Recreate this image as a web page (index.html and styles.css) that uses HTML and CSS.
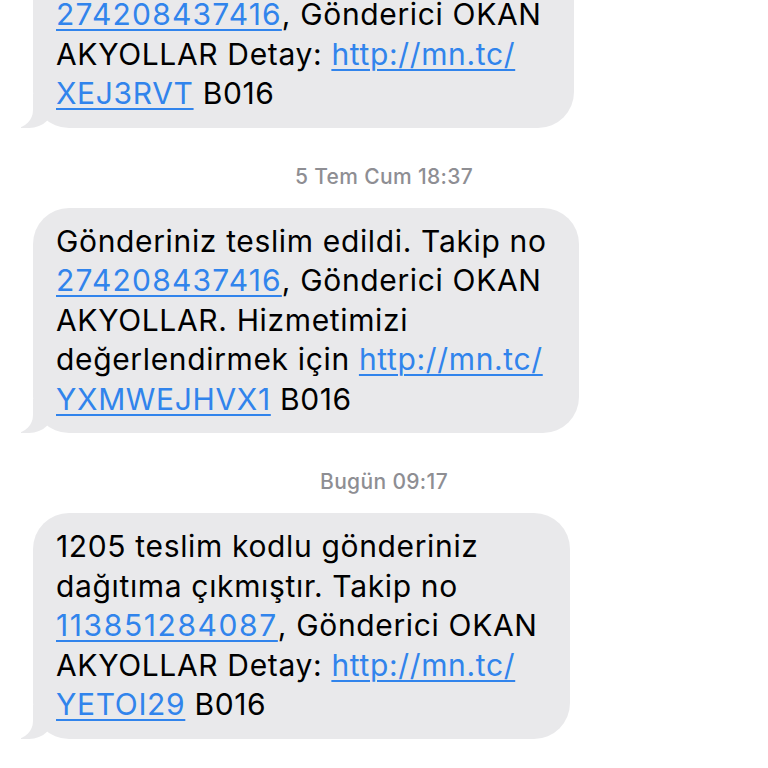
FILE: index.html
```html
<!DOCTYPE html>
<html lang="tr">
<head>
<meta charset="utf-8">
<title>Mesajlar</title>
<link rel="stylesheet" href="styles.css">
</head>
<body>
<main class="thread">
  <div class="bubble bubble-first">
    1205 teslim kodlu gönderiniz<br>
    dağıtıma çıkmıştır. Takip no<br>
    <a class="link num" href="#">274208437416</a>, Gönderici OKAN<br>
    AKYOLLAR Detay: <a class="link" href="#">http://mn.tc/<br>XEJ3RVT</a> B016
  </div>

  <div class="stamp">5 Tem Cum 18:37</div>

  <div class="bubble">
    Gönderiniz teslim edildi. Takip no<br>
    <a class="link num" href="#">274208437416</a>, Gönderici OKAN<br>
    AKYOLLAR. Hizmetimizi<br>
    değerlendirmek için <a class="link" href="#">http://mn.tc/<br>YXMWEJHVX1</a> B016
  </div>

  <div class="stamp">Bugün 09:17</div>

  <div class="bubble">
    1205 teslim kodlu gönderiniz<br>
    dağıtıma çıkmıştır. Takip no<br>
    <a class="link num num-wide" href="#">113851284087</a>, Gönderici OKAN<br>
    AKYOLLAR Detay: <a class="link" href="#">http://mn.tc/<br>YETOI29</a> B016
  </div>
</main>
</body>
</html>
```
FILE: styles.css
```css
html, body {
  margin: 0;
  padding: 0;
  background: #ffffff;
}

body {
  width: 768px;
  height: 768px;
  overflow: hidden;
  font-family: "Inter", "Liberation Sans", sans-serif;
}

.thread {
  display: flex;
  flex-direction: column;
  align-items: flex-start;
  padding-left: 33px;
}

.bubble {
  position: relative;
  box-sizing: border-box;
  background: #e9e9eb;
  color: #000000;
  border-radius: 36px;
  padding: 14px 32px 14px 23px;
  font-size: 30px;
  line-height: 39.5px;
  letter-spacing: 0.65px;
}

.bubble-first {
  margin-top: -98px;
}

.bubble::before {
  content: "";
  position: absolute;
  left: -12px;
  bottom: 0;
  width: 34px;
  height: 34px;
  background: #e9e9eb;
  border-bottom-right-radius: 26px;
}

.bubble::after {
  content: "";
  position: absolute;
  left: -44px;
  bottom: 0;
  width: 44px;
  height: 36px;
  background: #ffffff;
  border-bottom-right-radius: 18px;
}

.link {
  color: #3184ec;
  text-decoration: underline;
  text-decoration-thickness: 2px;
  text-underline-offset: 4px;
}

.num {
  letter-spacing: 1.2px;
}

.num-wide {
  letter-spacing: 1.6px;
}

.stamp {
  align-self: center;
  margin: 37px 0 19px -33px;
  font-size: 21px;
  line-height: 24px;
  font-weight: 500;
  letter-spacing: 0.35px;
  color: #8e8e93;
}
```
